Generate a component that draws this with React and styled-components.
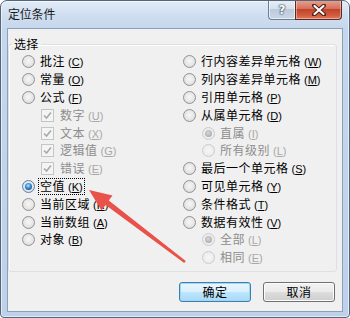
import React from "react";
import styled, { createGlobalStyle } from "styled-components";

const Global = createGlobalStyle`
  html, body { margin: 0; padding: 0; background: #ffffff; }
  body { font-family: "Noto Sans CJK SC", "Liberation Sans", sans-serif; }
  * { box-sizing: border-box; }
`;

const Window = styled.div`
  position: relative;
  width: 350px;
  height: 318px;
  border: 1px solid #54667c;
  border-radius: 7px 7px 4px 4px;
  background: linear-gradient(to bottom, #e3ecf7 0, #cfdef0 14px, #c5d7ec 28px, #bed1e8 100%);
  box-shadow: inset 0 0 0 1px rgba(255, 255, 255, 0.55);
  display: flex;
  flex-direction: column;
  overflow: hidden;
`;

const TitleBar = styled.div`
  height: 27px;
  display: flex;
  align-items: flex-start;
  flex: none;
`;

const Title = styled.div`
  padding: 5px 0 0 7px;
  font-size: 12px;
  line-height: 16px;
  color: #1a1a1a;
  letter-spacing: -0.2px;
`;

const Caption = styled.div`
  margin-left: auto;
  margin-right: 7px;
  margin-top: -1px;
  display: flex;
`;

const HelpBtn = styled.div`
  width: 27px;
  height: 20px;
  border: 1px solid #6d7f96;
  border-top: none;
  border-right: none;
  border-radius: 0 0 0 4px;
  background: linear-gradient(to bottom, #eaf0f7 0, #d6e0ec 45%, #bccbdc 50%, #c9d6e6 100%);
  box-shadow: inset 0 0 0 1px rgba(255, 255, 255, 0.6);
  display: flex;
  align-items: center;
  justify-content: center;
  font-family: "DejaVu Sans", sans-serif;
  font-weight: bold;
  font-size: 12px;
  color: #ffffff;
  text-shadow: 0 0 1px #2d3c50, 0 0 1px #2d3c50, 0 0 2px #2d3c50;
`;

const CloseBtn = styled.div`
  width: 47px;
  height: 20px;
  border: 1px solid #5a2a22;
  border-top: none;
  border-radius: 0 0 4px 0;
  background: linear-gradient(to bottom, #e8a493 0, #d6705a 45%, #c2442a 50%, #cf5b3e 80%, #e07a5c 100%);
  box-shadow: inset 0 0 0 1px rgba(255, 220, 210, 0.5);
  display: flex;
  align-items: center;
  justify-content: center;
`;

const Client = styled.div`
  flex: 1;
  margin: 0 6px 5px 6px;
  border: 1px solid #8ba0ba;
  background: #f0f0f0;
  display: flex;
  flex-direction: column;
`;

const GroupBox = styled.fieldset`
  margin: 7px 5px 0 0;
  padding: 0;
  border: 1px solid #dcdfe3;
  border-radius: 3px;
  box-shadow: 1px 1px 0 #ffffff inset;
  min-width: 0;
`;

const Legend = styled.legend`
  margin-left: 3px;
  padding: 0 2px;
  font-size: 12px;
  line-height: 16px;
  color: #000;
  letter-spacing: 0.3px;
`;

const Columns = styled.div`
  display: grid;
  grid-template-columns: 161px 1fr;
  padding: 1px 0 4px 13px;
`;

const Column = styled.div`
  display: flex;
  flex-direction: column;
`;

const Row = styled.div`
  height: 17.8px;
  display: flex;
  align-items: center;
  padding-left: ${(p) => (p.$indent ? 19 : 0)}px;
`;

const Radio = styled.span`
  position: relative;
  flex: none;
  width: 13px;
  height: 13px;
  border-radius: 50%;
  border: 1px solid ${(p) => (p.$disabled ? "#c9cbcd" : p.$checked ? "#5a7fa8" : "#929292")};
  background: ${(p) =>
    p.$disabled
      ? "radial-gradient(circle at 50% 50%, #f6f6f6 0, #ececec 70%, #e2e2e2 100%)"
      : "radial-gradient(circle at 50% 45%, #f7f7f7 0, #e6e6e6 55%, #cfcfcf 100%)"};
  &::after {
    content: "";
    display: ${(p) => (p.$checked ? "block" : "none")};
    position: absolute;
    inset: 2px;
    border-radius: 50%;
    background: ${(p) =>
      p.$disabled
        ? "radial-gradient(circle at 45% 40%, #d8d8d8 0, #b4b4b4 60%, #9c9c9c 100%)"
        : "radial-gradient(circle at 45% 38%, #b9e6ff 0, #3b93dd 40%, #15569f 75%, #0d3a73 100%)"};
  }
`;

const Check = styled.span`
  flex: none;
  width: 13px;
  height: 13px;
  border: 1px solid #c5c5c5;
  background: #f4f4f4;
  display: flex;
  align-items: center;
  justify-content: center;
`;

const Label = styled.span`
  margin-left: ${(p) => (p.$box ? 5 : 4)}px;
  font-size: 12px;
  line-height: 14px;
  letter-spacing: 0.5px;
  white-space: nowrap;
  color: ${(p) => (p.$disabled ? "#8d8d8d" : "#000")};
  padding: 0 1px;
  outline: ${(p) => (p.$focus ? "1px dotted #000" : "none")};
  outline-offset: 0;
`;

const Key = styled.span`
  font-family: "Liberation Sans", sans-serif;
  font-size: 11px;
  letter-spacing: 0;
  margin-left: 3px;
  color: ${(p) => (p.$disabled ? "#a8a8a8" : "#000")};
  & u { text-decoration-thickness: 1px; text-underline-offset: 1px; }
`;

const ButtonRow = styled.div`
  margin-top: auto;
  display: flex;
  justify-content: flex-end;
  gap: 12px;
  padding: 0 7px 9px 0;
`;

const Button = styled.div`
  width: 72px;
  height: 20px;
  border-radius: 3px;
  border: 1px solid ${(p) => (p.$default ? "#3c7fb1" : "#707070")};
  background: ${(p) =>
    p.$default
      ? "linear-gradient(to bottom, #eaf6fd 0, #d9f0fc 50%, #bee6fd 50%, #a7d9f5 100%)"
      : "linear-gradient(to bottom, #f2f2f2 0, #ebebeb 50%, #dddddd 50%, #cfcfcf 100%)"};
  box-shadow: ${(p) => (p.$default ? "inset 0 0 0 1px #9fd6f0" : "inset 0 0 0 1px #fcfcfc")};
  display: flex;
  align-items: center;
  justify-content: center;
  font-size: 12px;
  line-height: 14px;
  letter-spacing: 0.5px;
  color: #000;
`;

const Overlay = styled.svg`
  position: absolute;
  left: -1px;
  top: -1px;
  pointer-events: none;
`;

const leftItems = [
  { t: "批注", k: "C", kind: "radio" },
  { t: "常量", k: "O", kind: "radio" },
  { t: "公式", k: "F", kind: "radio" },
  { t: "数字", k: "U", kind: "check", indent: true, disabled: true },
  { t: "文本", k: "X", kind: "check", indent: true, disabled: true },
  { t: "逻辑值", k: "G", kind: "check", indent: true, disabled: true },
  { t: "错误", k: "E", kind: "check", indent: true, disabled: true },
  { t: "空值", k: "K", kind: "radio", checked: true, focus: true },
  { t: "当前区域", k: "R", kind: "radio" },
  { t: "当前数组", k: "A", kind: "radio" },
  { t: "对象", k: "B", kind: "radio" },
];

const rightItems = [
  { t: "行内容差异单元格", k: "W", kind: "radio" },
  { t: "列内容差异单元格", k: "M", kind: "radio" },
  { t: "引用单元格", k: "P", kind: "radio" },
  { t: "从属单元格", k: "D", kind: "radio" },
  { t: "直属", k: "I", kind: "radio", indent: true, disabled: true, checked: true },
  { t: "所有级别", k: "L", kind: "radio", indent: true, disabled: true },
  { t: "最后一个单元格", k: "S", kind: "radio" },
  { t: "可见单元格", k: "Y", kind: "radio" },
  { t: "条件格式", k: "T", kind: "radio" },
  { t: "数据有效性", k: "V", kind: "radio" },
  { t: "全部", k: "L", kind: "radio", indent: true, disabled: true, checked: true },
  { t: "相同", k: "E", kind: "radio", indent: true, disabled: true },
];

function Item({ it }) {
  return (
    <Row $indent={it.indent}>
      {it.kind === "radio" ? (
        <Radio $checked={it.checked} $disabled={it.disabled} />
      ) : (
        <Check>
          <svg width="9" height="9" viewBox="0 0 9 9">
            <path d="M1 4.5 L3.5 7 L8 1.5" fill="none" stroke="#a9a9a9" strokeWidth="1.6" />
          </svg>
        </Check>
      )}
      <Label $disabled={it.disabled} $focus={it.focus} $box={it.kind === "check"}>
        {it.t}
        <Key $disabled={it.disabled}>
          (<u>{it.k}</u>)
        </Key>
      </Label>
    </Row>
  );
}

export default function App() {
  return (
    <>
      <Global />
      <Window>
        <TitleBar>
          <Title>定位条件</Title>
          <Caption>
            <HelpBtn>?</HelpBtn>
            <CloseBtn>
              <svg width="14" height="12" viewBox="0 0 14 12">
                <path
                  d="M2 1.5 L12 10.5 M12 1.5 L2 10.5"
                  stroke="#4a1c14"
                  strokeWidth="4"
                  strokeLinecap="round"
                />
                <path
                  d="M2.5 2 L11.5 10 M11.5 2 L2.5 10"
                  stroke="#ffffff"
                  strokeWidth="2.2"
                  strokeLinecap="round"
                />
              </svg>
            </CloseBtn>
          </Caption>
        </TitleBar>
        <Client>
          <GroupBox>
            <Legend>选择</Legend>
            <Columns>
              <Column>
                {leftItems.map((it, i) => (
                  <Item key={i} it={it} />
                ))}
              </Column>
              <Column>
                {rightItems.map((it, i) => (
                  <Item key={i} it={it} />
                ))}
              </Column>
            </Columns>
          </GroupBox>
          <ButtonRow>
            <Button $default>确定</Button>
            <Button>取消</Button>
          </ButtonRow>
        </Client>
        <Overlay width="350" height="318" viewBox="0 0 350 318">
          <polygon
            points="89,190 112.5,195.5 108.8,200.6 185.8,261 184.2,263 105.6,204.9 101.5,210.5"
            fill="#e8524a"
          />
        </Overlay>
      </Window>
    </>
  );
}
